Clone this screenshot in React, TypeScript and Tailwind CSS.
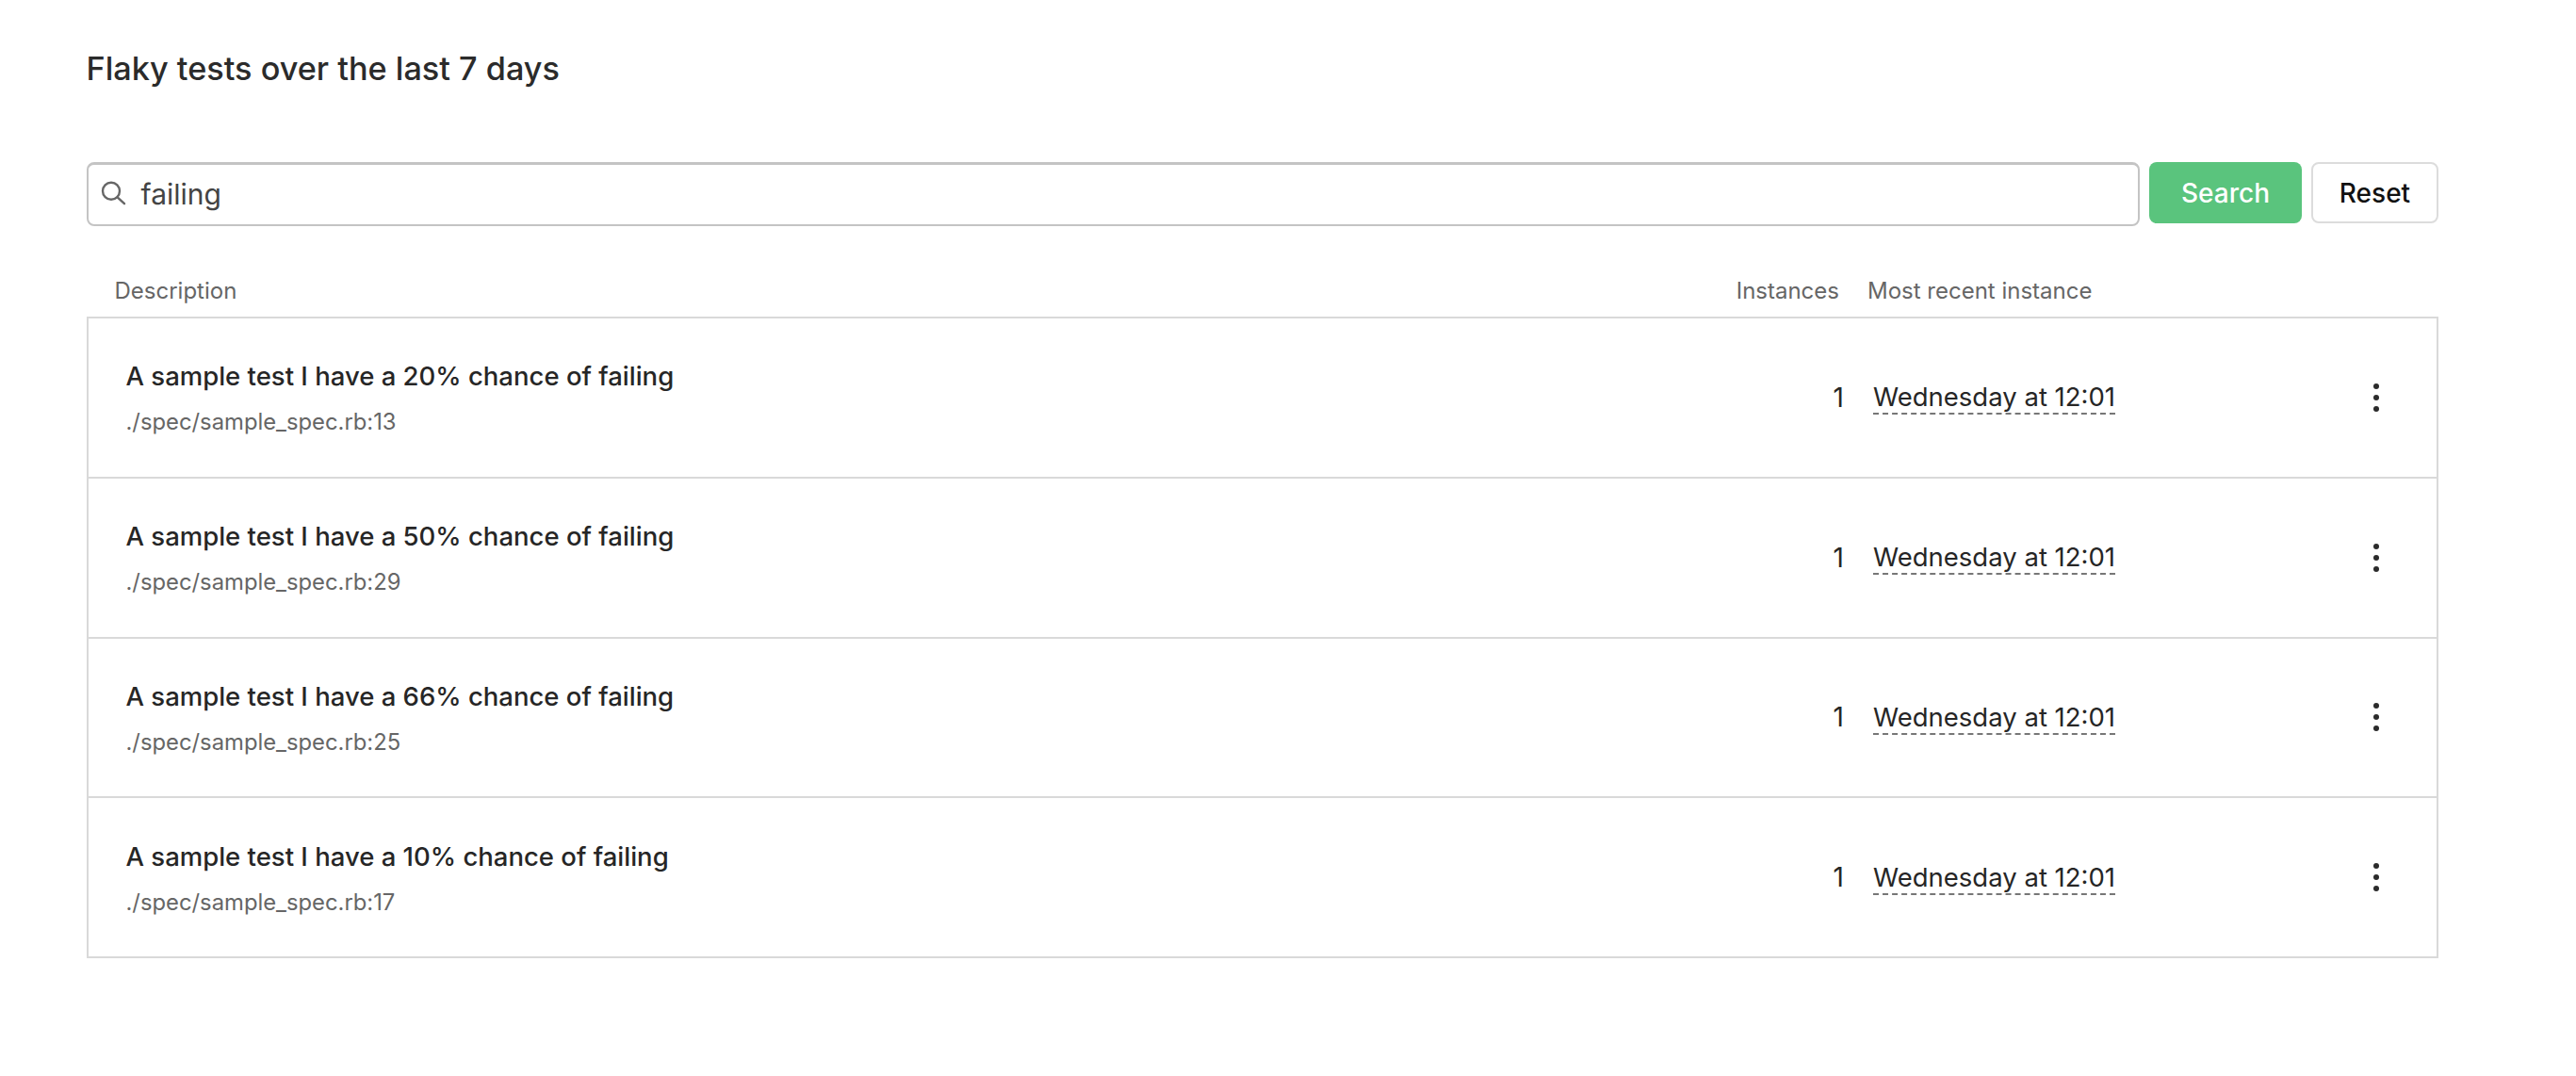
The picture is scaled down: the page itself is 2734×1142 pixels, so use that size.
const rows = [
  { title: 'A sample test I have a 20% chance of failing', path: './spec/sample_spec.rb:13' },
  { title: 'A sample test I have a 50% chance of failing', path: './spec/sample_spec.rb:29' },
  { title: 'A sample test I have a 66% chance of failing', path: './spec/sample_spec.rb:25' },
  { title: 'A sample test I have a 10% chance of failing', path: './spec/sample_spec.rb:17' }
];

function SearchIcon() {
  return (
    <svg width="30" height="30" viewBox="0 0 30 30" fill="none" stroke="#666666" strokeWidth="2.4" className="shrink-0">
      <circle cx="11" cy="10.7" r="9" />
      <path d="M17.6 17.4l7.4 6.8" strokeLinecap="round" />
    </svg>
  );
}

function MoreIcon() {
  return (
    <div className="flex flex-col gap-[6px]">
      <span className="size-[6px] rounded-full bg-[#2b2b2b]" />
      <span className="size-[6px] rounded-full bg-[#2b2b2b]" />
      <span className="size-[6px] rounded-full bg-[#2b2b2b]" />
    </div>
  );
}

function Row({ title, path }: { title: string; path: string }) {
  return (
    <div className="flex h-[169.75px] items-center border-b-2 border-[#d9d9d9]">
      <div className="flex-1 pt-[2px] pl-[40px]">
        <div className="text-[27.5px] leading-[36px] font-medium text-[#262626]">{title}</div>
        <div className="mt-[15px] text-[23.8px] leading-[32px] text-[#666666]">{path}</div>
      </div>
      <div className="w-[110px] text-right text-[28px] text-[#262626]">1</div>
      <div className="ml-[31px] w-[257px] pt-[1px]">
        <span className="inline-block border-b-2 border-dashed border-[#777777] text-[27.5px] leading-[34px] whitespace-nowrap text-[#262626]">
          Wednesday at 12:01
        </span>
      </div>
      <div className="flex w-[341px] justify-end pr-[61px]">
        <MoreIcon />
      </div>
    </div>
  );
}

export default function App() {
  return (
    <div className="min-h-[1142px] bg-white pt-[52px] pr-[146px] pl-[91.5px] font-['Inter',sans-serif]">
      <h1 className="text-[34.25px] leading-[42px] font-medium text-[#2b2b2b]">Flaky tests over the last 7 days</h1>
      <div className="mt-[78px] flex items-start gap-[10px]">
        <div className="flex h-[68px] flex-1 items-center gap-[13px] rounded-[8px] border-2 border-t-[3px] border-[#c4c4c4] pl-[13px]">
          <SearchIcon />
          <span className="text-[30px] text-[#444444]">failing</span>
        </div>
        <button className="h-[65px] w-[162px] rounded-[8px] bg-[#5ac47d] text-[28px] font-medium text-white">Search</button>
        <button className="h-[65px] w-[135px] rounded-[8px] border-2 border-[#dcdcdc] text-[28px] font-medium text-[#111111]">Reset</button>
      </div>
      <div className="mt-[53px] flex h-[32px] items-center text-[24px] text-[#666666]">
        <div className="flex-1 pl-[30px]">Description</div>
        <div className="w-[110px] text-right">Instances</div>
        <div className="ml-[30px] w-[606px]">Most recent instance</div>
      </div>
      <div className="mt-[11px] border-x-2 border-t-2 border-[#d9d9d9]">
        {rows.map((r) => (
          <Row key={r.path} title={r.title} path={r.path} />
        ))}
      </div>
    </div>
  );
}
